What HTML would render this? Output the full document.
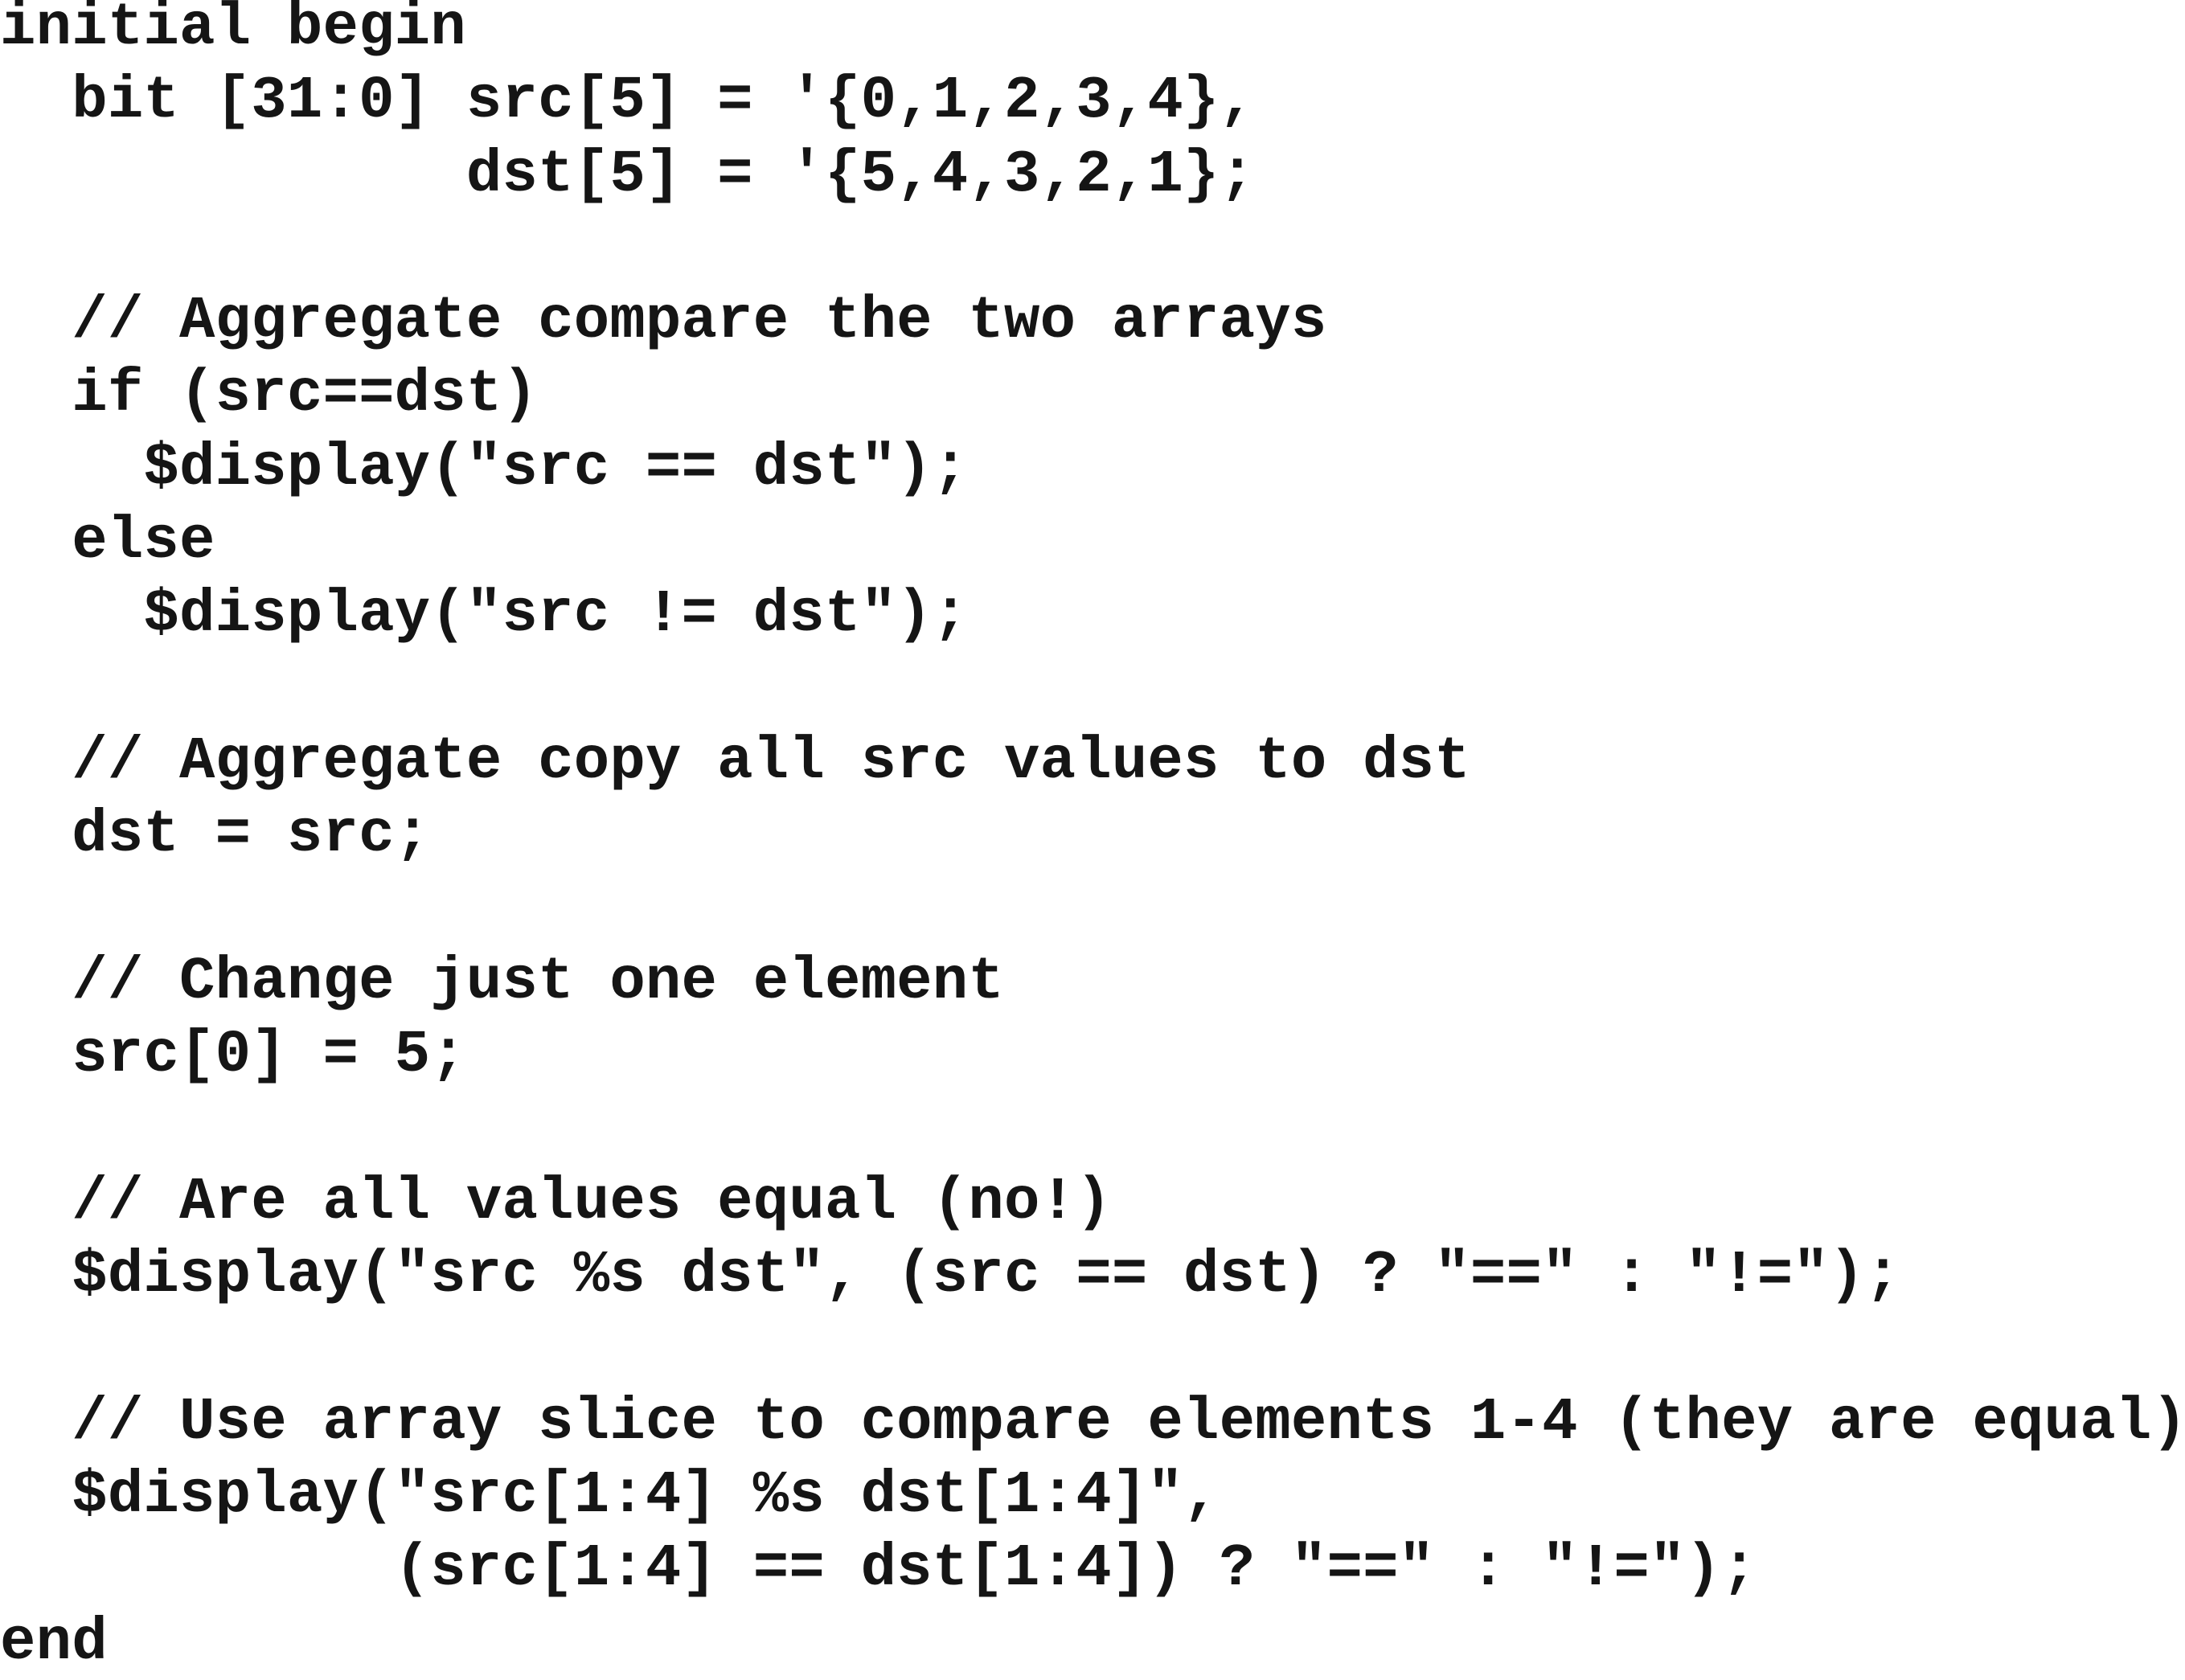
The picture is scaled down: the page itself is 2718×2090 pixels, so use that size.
<!DOCTYPE html>
<html><head><meta charset="utf-8"><style>
html,body{margin:0;padding:0;background:#fff;width:2718px;height:2066px;overflow:hidden}
pre{position:absolute;left:0;top:-10px;margin:0;font-family:"Liberation Mono",monospace;font-weight:bold;font-size:74px;line-height:91.3px;color:#151515;letter-spacing:0.2px;white-space:pre}
</style></head><body><pre>initial begin
  bit [31:0] src[5] = '{0,1,2,3,4},
             dst[5] = '{5,4,3,2,1};

  // Aggregate compare the two arrays
  if (src==dst)
    $display("src == dst");
  else
    $display("src != dst");

  // Aggregate copy all src values to dst
  dst = src;

  // Change just one element
  src[0] = 5;

  // Are all values equal (no!)
  $display("src %s dst", (src == dst) ? "==" : "!=");

  // Use array slice to compare elements 1-4 (they are equal)
  $display("src[1:4] %s dst[1:4]",
           (src[1:4] == dst[1:4]) ? "==" : "!=");
end</pre></body></html>
